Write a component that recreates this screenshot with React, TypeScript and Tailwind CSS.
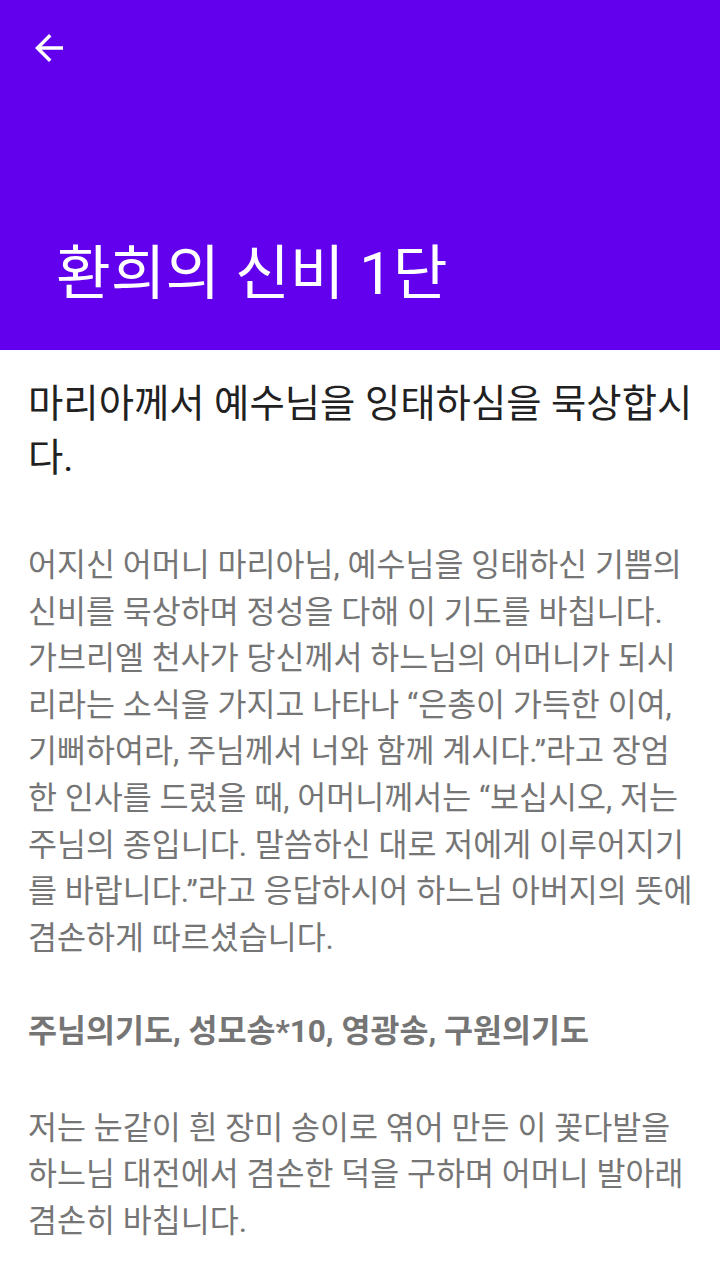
import React from "react";

const font = { fontFamily: 'Roboto, "Noto Sans CJK KR", sans-serif' };

const bodyLines = [
  "어지신 어머니 마리아님, 예수님을 잉태하신 기쁨의",
  "신비를 묵상하며 정성을 다해 이 기도를 바칩니다.",
  "가브리엘 천사가 당신께서 하느님의 어머니가 되시",
  "리라는 소식을 가지고 나타나 “은총이 가득한 이여,",
  "기뻐하여라, 주님께서 너와 함께 계시다.”라고 장엄",
  "한 인사를 드렸을 때, 어머니께서는 “보십시오, 저는",
  "주님의 종입니다. 말씀하신 대로 저에게 이루어지기",
  "를 바랍니다.”라고 응답하시어 하느님 아버지의 뜻에",
  "겸손하게 따르셨습니다.",
];

const lastLines = [
  "저는 눈같이 흰 장미 송이로 엮어 만든 이 꽃다발을",
  "하느님 대전에서 겸손한 덕을 구하며 어머니 발아래",
  "겸손히 바칩니다.",
];

export default function App() {
  return (
    <div className="w-[720px] h-[1280px] bg-white overflow-hidden" style={font}>
      <div className="h-[350px] bg-[#6200ee] flex flex-col">
        <div className="h-[96px] flex items-center pl-[28px]">
          <svg width="42" height="42" viewBox="0 0 24 24" fill="#ffffff">
            <path d="M20 11H7.83l5.59-5.59L12 4l-8 8 8 8 1.41-1.41L7.83 13H20v-2z" />
          </svg>
        </div>
        <div className="pl-[56px] pt-[136px] text-white text-[59.5px] leading-[84px] whitespace-nowrap">
          환희의 신비 1단
        </div>
      </div>
      <div className="px-[28px] pt-[27px]">
        <div className="text-[38.4px] leading-[54px] text-[#212121]">
          <div className="whitespace-nowrap">마리아께서 예수님을 잉태하심을 묵상합시</div>
          <div className="whitespace-nowrap">다.</div>
        </div>
        <div className="mt-[58px] text-[31.5px] leading-[46.6px] text-[#757575]">
          {bodyLines.map((l, i) => (
            <div key={i} className="whitespace-nowrap">{l}</div>
          ))}
        </div>
        <div className="mt-[46.6px] text-[31.5px] leading-[46.6px] text-[#757575] font-bold whitespace-nowrap">
          주님의기도, 성모송*10, 영광송, 구원의기도
        </div>
        <div className="mt-[50px] text-[31.5px] leading-[46.6px] text-[#757575]">
          {lastLines.map((l, i) => (
            <div key={i} className="whitespace-nowrap">{l}</div>
          ))}
        </div>
      </div>
    </div>
  );
}
